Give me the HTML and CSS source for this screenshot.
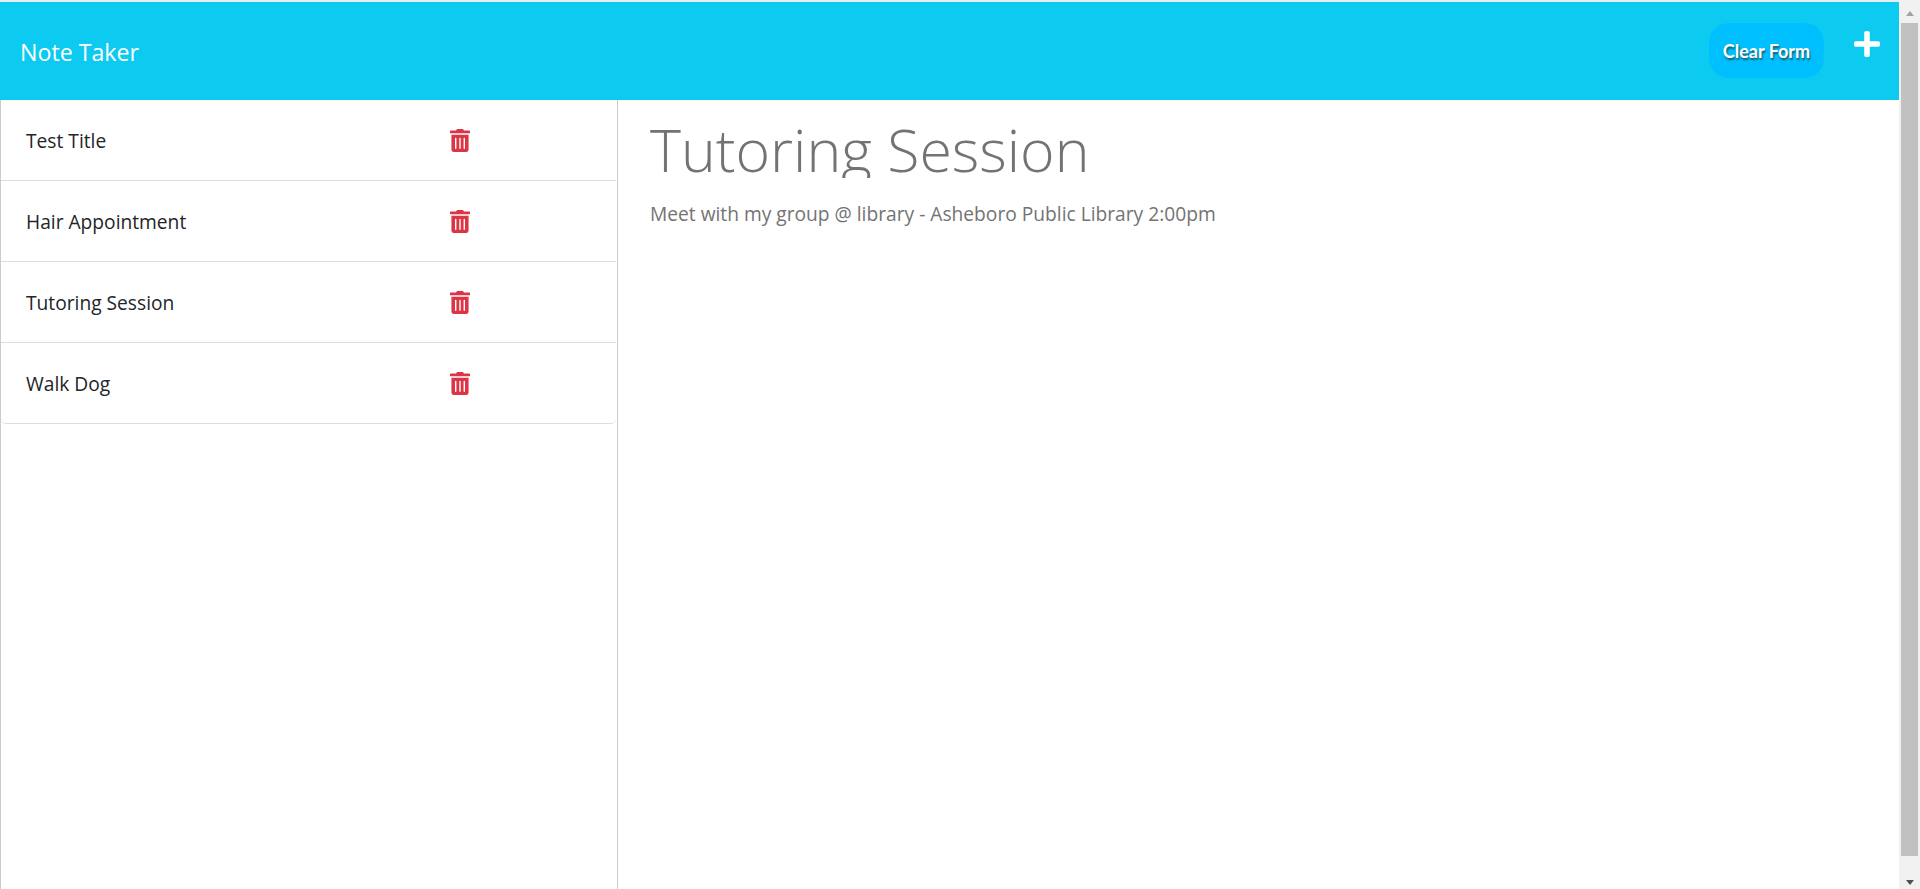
FILE: index.html
```html
<!DOCTYPE html>
<html lang="en">

<head>
    <meta charset="UTF-8">
    <meta name="viewport" content="width=device-width, initial-scale=1.0">
    <title>Note Taker</title>
    <link rel="stylesheet" href="styles.css">
</head>

<body>
    <div class="page">
        <div class="content">
            <nav class="navbar">
                <a class="brand">Note Taker</a>
                <div class="nav-actions">
                    <button class="clear-btn">Clear Form</button>
                    <svg class="plus-icon" viewBox="0 0 448 512"><path d="M416 208H272V64c0-17.67-14.33-32-32-32h-32c-17.67 0-32 14.33-32 32v144H32c-17.67 0-32 14.33-32 32v32c0 17.67 14.33 32 32 32h144v144c0 17.67 14.33 32 32 32h32c17.67 0 32-14.33 32-32V304h144c17.67 0 32-14.33 32-32v-32c0-17.67-14.33-32-32-32z"/></svg>
                </div>
            </nav>
            <div class="columns">
                <aside class="sidebar">
                    <ul class="note-list">
                        <li class="note-item">
                            <span class="note-name">Test Title</span>
                            <svg class="trash-icon" viewBox="0 0 448 512"><path d="M32 464a48 48 0 0 0 48 48h288a48 48 0 0 0 48-48V128H32zm272-256a16 16 0 0 1 32 0v224a16 16 0 0 1-32 0zm-96 0a16 16 0 0 1 32 0v224a16 16 0 0 1-32 0zm-96 0a16 16 0 0 1 32 0v224a16 16 0 0 1-32 0zM432 32H312l-9.4-18.7A24 24 0 0 0 281.1 0H166.8a23.72 23.72 0 0 0-21.4 13.3L136 32H16A16 16 0 0 0 0 48v32a16 16 0 0 0 16 16h416a16 16 0 0 0 16-16V48a16 16 0 0 0-16-16z"/></svg>
                        </li>
                        <li class="note-item">
                            <span class="note-name">Hair Appointment</span>
                            <svg class="trash-icon" viewBox="0 0 448 512"><path d="M32 464a48 48 0 0 0 48 48h288a48 48 0 0 0 48-48V128H32zm272-256a16 16 0 0 1 32 0v224a16 16 0 0 1-32 0zm-96 0a16 16 0 0 1 32 0v224a16 16 0 0 1-32 0zm-96 0a16 16 0 0 1 32 0v224a16 16 0 0 1-32 0zM432 32H312l-9.4-18.7A24 24 0 0 0 281.1 0H166.8a23.72 23.72 0 0 0-21.4 13.3L136 32H16A16 16 0 0 0 0 48v32a16 16 0 0 0 16 16h416a16 16 0 0 0 16-16V48a16 16 0 0 0-16-16z"/></svg>
                        </li>
                        <li class="note-item">
                            <span class="note-name">Tutoring Session</span>
                            <svg class="trash-icon" viewBox="0 0 448 512"><path d="M32 464a48 48 0 0 0 48 48h288a48 48 0 0 0 48-48V128H32zm272-256a16 16 0 0 1 32 0v224a16 16 0 0 1-32 0zm-96 0a16 16 0 0 1 32 0v224a16 16 0 0 1-32 0zm-96 0a16 16 0 0 1 32 0v224a16 16 0 0 1-32 0zM432 32H312l-9.4-18.7A24 24 0 0 0 281.1 0H166.8a23.72 23.72 0 0 0-21.4 13.3L136 32H16A16 16 0 0 0 0 48v32a16 16 0 0 0 16 16h416a16 16 0 0 0 16-16V48a16 16 0 0 0-16-16z"/></svg>
                        </li>
                        <li class="note-item">
                            <span class="note-name">Walk Dog</span>
                            <svg class="trash-icon" viewBox="0 0 448 512"><path d="M32 464a48 48 0 0 0 48 48h288a48 48 0 0 0 48-48V128H32zm272-256a16 16 0 0 1 32 0v224a16 16 0 0 1-32 0zm-96 0a16 16 0 0 1 32 0v224a16 16 0 0 1-32 0zm-96 0a16 16 0 0 1 32 0v224a16 16 0 0 1-32 0zM432 32H312l-9.4-18.7A24 24 0 0 0 281.1 0H166.8a23.72 23.72 0 0 0-21.4 13.3L136 32H16A16 16 0 0 0 0 48v32a16 16 0 0 0 16 16h416a16 16 0 0 0 16-16V48a16 16 0 0 0-16-16z"/></svg>
                        </li>
                    </ul>
                </aside>
                <main class="note-view">
                    <div class="note-title">Tutoring Session</div>
                    <p class="note-text">Meet with my group @ library - Asheboro Public Library 2:00pm</p>
                </main>
            </div>
        </div>
        <div class="scrollbar">
            <span class="arrow-up"></span>
            <div class="thumb"></div>
            <span class="arrow-down"></span>
        </div>
    </div>
</body>

</html>
```

FILE: styles.css
```css
* {
    margin: 0;
    padding: 0;
    box-sizing: border-box;
}

html,
body {
    height: 100%;
    overflow: hidden;
}

body {
    font-family: "Open Sans", "Noto Sans", sans-serif;
    background-color: #fff;
}

.page {
    display: flex;
    height: 889px;
}

.content {
    flex: 1;
    display: flex;
    flex-direction: column;
    min-width: 0;
    padding-top: 2px;
    background: linear-gradient(#e4eef1 2px, #fff 2px);
}

.navbar {
    display: flex;
    justify-content: space-between;
    align-items: center;
    height: 98px;
    padding: 0 19px 0 20px;
    background-color: #0dcaf0;
}

.brand {
    margin-top: 2px;
    color: #fff;
    font-size: 23.2px;
}

.nav-actions {
    display: flex;
    align-items: center;
    gap: 30px;
}

.clear-btn {
    width: 115px;
    height: 55px;
    margin-bottom: 1px;
    border: none;
    border-radius: 20px;
    background-color: #00bfff;
    color: #fff;
    font-family: "Lato", sans-serif;
    font-size: 18px;
    font-weight: 700;
    text-shadow: 1px 2px 2px #125a70;
}

.plus-icon {
    width: 26px;
    height: 30px;
    margin-bottom: 14px;
    fill: #fff;
}

.columns {
    flex: 1;
    display: flex;
    min-height: 0;
    background-color: #fff;
}

.sidebar {
    width: 618px;
    padding-right: 1px;
    border-left: 1px solid #ccc;
    border-right: 1px solid #ccc;
}

.note-list {
    list-style: none;
}

.note-item {
    display: flex;
    align-items: center;
    height: 81px;
    padding-left: 25px;
    border-bottom: 1px solid #ddd;
}

.note-item:last-child {
    border-bottom-left-radius: 5px;
    border-bottom-right-radius: 5px;
}

.note-name {
    width: 424px;
    color: #212529;
    font-size: 19.2px;
}

.trash-icon {
    width: 20px;
    height: 23px;
    fill: #dc3545;
}

.note-view {
    flex: 1;
    padding-left: 32px;
    color: #737373;
}

.note-title {
    height: 78px;
    overflow: hidden;
    font-size: 59px;
    font-weight: 300;
    line-height: 98px;
}

.note-text {
    margin-top: 22px;
    font-size: 19.2px;
    line-height: 27px;
}

.scrollbar {
    display: flex;
    flex-direction: column;
    align-items: center;
    width: 21px;
    background-color: #f1f1f1;
}

.thumb {
    width: 17px;
    height: 833px;
    margin: 7px 0 24px;
    background-color: #c1c1c1;
}

.arrow-up {
    width: 0;
    height: 0;
    margin-top: 11px;
    border-left: 4.5px solid transparent;
    border-right: 4.5px solid transparent;
    border-bottom: 5px solid #a3a3a3;
}

.arrow-down {
    width: 0;
    height: 0;
    border-left: 4.5px solid transparent;
    border-right: 4.5px solid transparent;
    border-top: 5px solid #505050;
}
```
